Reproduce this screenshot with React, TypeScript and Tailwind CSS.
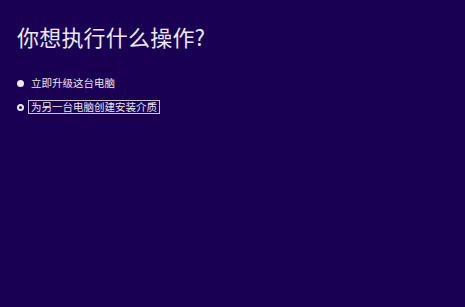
import React, { useState } from 'react';

const options = ['立即升级这台电脑', '为另一台电脑创建安装介质'];

const App: React.FC = () => {
  const [selected, setSelected] = useState(0);

  return (
    <div
      className="w-[465px] h-[307px] bg-[#1a0052] text-[#ebe7f3] pl-[17px] pt-[23px] overflow-hidden"
      style={{ fontFamily: '"Noto Sans CJK SC", "Noto Sans", sans-serif' }}
    >
      <h1 className="text-[22px] leading-[26px] font-normal tracking-[0.2px]">你想执行什么操作?</h1>

      <div className="mt-[27px] flex flex-col gap-[10px]">
        {options.map((label, i) => (
          <label
            key={label}
            onClick={() => setSelected(i)}
            className="flex items-center cursor-pointer"
          >
            <span className="w-[7px] h-[7px] mr-[4px] shrink-0 rounded-full flex items-center justify-center">
              {selected === i ? (
                <span className="w-[7px] h-[7px] rounded-full bg-[#ece8f4]" />
              ) : (
                <span className="w-[7px] h-[7px] rounded-full border-[2px] border-[#ece8f4]" />
              )}
            </span>
            <span
              className={`text-[10.5px] leading-[12px] px-[2px] border ${
                i === 1 ? 'border-[#c9c2da]' : 'border-transparent'
              }`}
            >
              {label}
            </span>
          </label>
        ))}
      </div>
    </div>
  );
};

export default App;
